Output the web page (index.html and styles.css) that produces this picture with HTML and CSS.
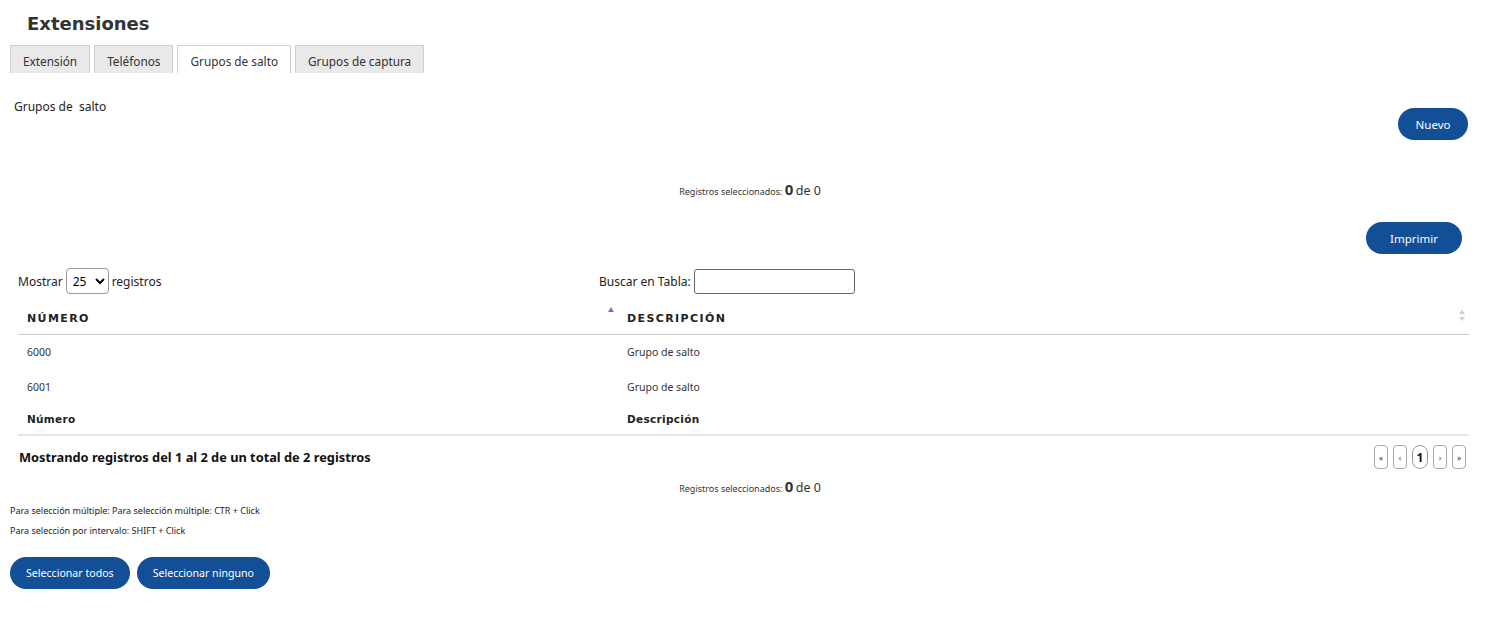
FILE: index.html
```html
<!DOCTYPE html>
<html lang="es">
<head>
  <meta charset="UTF-8">
  <meta name="viewport" content="width=device-width, initial-scale=1.0">
  <title>Extensiones</title>
  <link rel="stylesheet" href="styles.css">
</head>
<body>
  <div class="page">
    <h1 class="title">Extensiones</h1>

    <ul class="tabs">
      <li class="tab">Extensión</li>
      <li class="tab">Teléfonos</li>
      <li class="tab active">Grupos de salto</li>
      <li class="tab">Grupos de captura</li>
    </ul>

    <div class="panel">
      <div class="panel-head">
        <span class="panel-label">Grupos de &nbsp;salto</span>
        <button class="btn btn-new">Nuevo</button>
      </div>

      <div class="selected">Registros seleccionados: <b>0</b> <span class="of">de 0</span></div>

      <div class="print-row">
        <button class="btn btn-print">Imprimir</button>
      </div>

      <div class="dt-wrapper">
        <div class="dt-top">
          <div class="dt-length">
            Mostrar
            <select class="dt-select">
              <option>25</option>
            </select>
            registros
          </div>
          <div class="dt-filter">
            Buscar en Tabla: <input type="text" class="dt-search">
          </div>
        </div>

        <table class="dt-table">
          <thead>
            <tr>
              <th class="col-num sorted">NÚMERO<span class="sort-up"></span></th>
              <th class="col-desc sortable">DESCRIPCIÓN<span class="sort-both"></span></th>
            </tr>
          </thead>
          <tbody>
            <tr>
              <td>6000</td>
              <td>Grupo de salto</td>
            </tr>
            <tr>
              <td>6001</td>
              <td>Grupo de salto</td>
            </tr>
          </tbody>
          <tfoot>
            <tr>
              <th>Número</th>
              <th>Descripción</th>
            </tr>
          </tfoot>
        </table>

        <div class="dt-bottom">
          <div class="dt-info">Mostrando registros del 1 al 2 de un total de 2 registros</div>
          <div class="dt-paginate">
            <span class="page-btn">«</span>
            <span class="page-btn">‹</span>
            <span class="page-btn current">1</span>
            <span class="page-btn">›</span>
            <span class="page-btn">»</span>
          </div>
        </div>
      </div>

      <div class="selected selected-bottom">Registros seleccionados: <b>0</b> <span class="of">de 0</span></div>

      <p class="hint">Para selección múltiple: Para selección múltiple: CTR + Click</p>
      <p class="hint">Para selección por intervalo: SHIFT + Click</p>

      <div class="select-actions">
        <button class="btn">Seleccionar todos</button>
        <button class="btn">Seleccionar ninguno</button>
      </div>
    </div>
  </div>
</body>
</html>
```

FILE: styles.css
```css
/* base */
* {
  margin: 0;
  padding: 0;
  box-sizing: border-box;
}

body {
  font-family: 'Noto Sans', 'Open Sans', sans-serif;
  color: #222;
  background: #fff;
}

.page {
  padding: 0 10px;
}

.title {
  font-family: 'DejaVu Sans', sans-serif;
  font-size: 18px;
  font-weight: bold;
  color: #333;
  padding: 13px 0 0 17px;
  line-height: 22px;
  height: 45px;
}

/* tabs */
.tabs {
  display: flex;
  gap: 4px;
  list-style: none;
  height: 28px;
}

.tab {
  font-size: 11.8px;
  color: #333;
  background: #e9e9e9;
  border: 1px solid #d0d0d0;
  border-bottom: none;
  padding: 2px 12px 0;
  line-height: 26px;
}

.tab.active {
  background: #fff;
}

/* panel */
.panel {
  padding-top: 25px;
}

.panel-head {
  display: flex;
  justify-content: space-between;
  align-items: flex-start;
  padding-left: 4px;
  padding-right: 22px;
}

.panel-label {
  font-size: 12px;
  line-height: 18px;
}

.btn {
  background: #134f97;
  color: #fff;
  border: none;
  border-radius: 16px;
  height: 32px;
  padding: 0 16px;
  font-family: 'Noto Sans', 'Open Sans', sans-serif;
  font-size: 11.5px;
}

.btn-new {
  margin-top: 10px;
  width: 70px;
  padding: 0;
}

.selected {
  text-align: center;
  font-size: 9px;
  color: #333;
  margin-top: 40px;
  line-height: 18px;
}

.selected b {
  font-size: 15px;
}

.selected .of {
  font-size: 12.5px;
}

.print-row {
  display: flex;
  justify-content: flex-end;
  padding-right: 28px;
  margin-top: 21px;
}

.btn-print {
  width: 96px;
  padding: 0;
}

/* data table */
.dt-wrapper {
  padding: 0 21px 0 8px;
  margin-top: 14px;
}

.dt-top {
  display: flex;
  align-items: center;
  height: 26px;
  font-size: 12px;
}

.dt-length {
  width: 581px;
  display: flex;
  align-items: center;
  gap: 3px;
}

.dt-select {
  width: 43px;
  height: 26px;
  border: 1px solid #999;
  border-radius: 4px;
  font-family: 'Noto Sans', sans-serif;
  font-size: 12px;
  padding-left: 2px;
  background: #fff;
}

.dt-filter {
  display: flex;
  align-items: center;
  gap: 3px;
}

.dt-search {
  width: 161px;
  height: 25px;
  border: 1px solid #666;
  border-radius: 3px;
}

.dt-table {
  width: 100%;
  border-collapse: collapse;
  margin-top: 4px;
}

.dt-table thead th {
  font-family: 'DejaVu Sans', sans-serif;
  font-size: 11px;
  font-weight: bold;
  letter-spacing: 1.4px;
  text-align: left;
  color: #222;
  padding: 6px 9px 0;
  height: 36px;
  border-bottom: 1px solid #ccc;
  position: relative;
  vertical-align: middle;
}

.col-num {
  width: 600px;
}

.sort-up {
  position: absolute;
  right: 4px;
  top: 9px;
  border-left: 3px solid transparent;
  border-right: 3px solid transparent;
  border-bottom: 5px solid #6b74d8;
}

.sort-both {
  position: absolute;
  right: 4px;
  top: 12px;
  width: 6px;
  height: 11px;
}

.sort-both::before,
.sort-both::after {
  content: '';
  position: absolute;
  left: 0;
  border-left: 3px solid transparent;
  border-right: 3px solid transparent;
}

.sort-both::before {
  top: 0;
  border-bottom: 4px solid #ccc;
}

.sort-both::after {
  bottom: 0;
  border-top: 4px solid #ccc;
}

.dt-table tbody td {
  font-size: 10.5px;
  color: #333;
  padding: 0 9px;
  height: 33px;
}

.dt-table tbody tr:first-child td {
  height: 36px;
}

.dt-table tfoot th {
  font-family: 'DejaVu Sans', sans-serif;
  font-size: 10.5px;
  font-weight: bold;
  letter-spacing: 0.3px;
  text-align: left;
  color: #222;
  padding: 0 9px;
  height: 32px;
  border-bottom: 2px solid #e4e4e4;
}

.dt-bottom {
  display: flex;
  justify-content: space-between;
  align-items: center;
  margin-top: 9px;
  height: 24px;
}

.dt-info {
  font-size: 12.8px;
  font-weight: bold;
  color: #111;
  padding-left: 1px;
}

.dt-paginate {
  display: flex;
  gap: 5px;
  margin-right: 3px;
}

.page-btn {
  display: flex;
  align-items: center;
  justify-content: center;
  width: 14px;
  height: 24px;
  border: 1px solid #aaa;
  border-radius: 4px;
  font-size: 8px;
  color: #333;
}

.page-btn.current {
  width: 16px;
  border-radius: 8px;
  border-color: #999;
  font-size: 12px;
  font-weight: bold;
  color: #111;
}

.selected-bottom {
  margin-top: 8px;
}

.hint {
  font-size: 9px;
  color: #222;
  line-height: 20px;
}

.hint:first-of-type {
  margin-top: 3px;
}

.select-actions {
  display: flex;
  gap: 7px;
  margin-top: 16px;
}

.select-actions .btn {
  font-size: 10.6px;
  padding: 0 16px;
}
```
